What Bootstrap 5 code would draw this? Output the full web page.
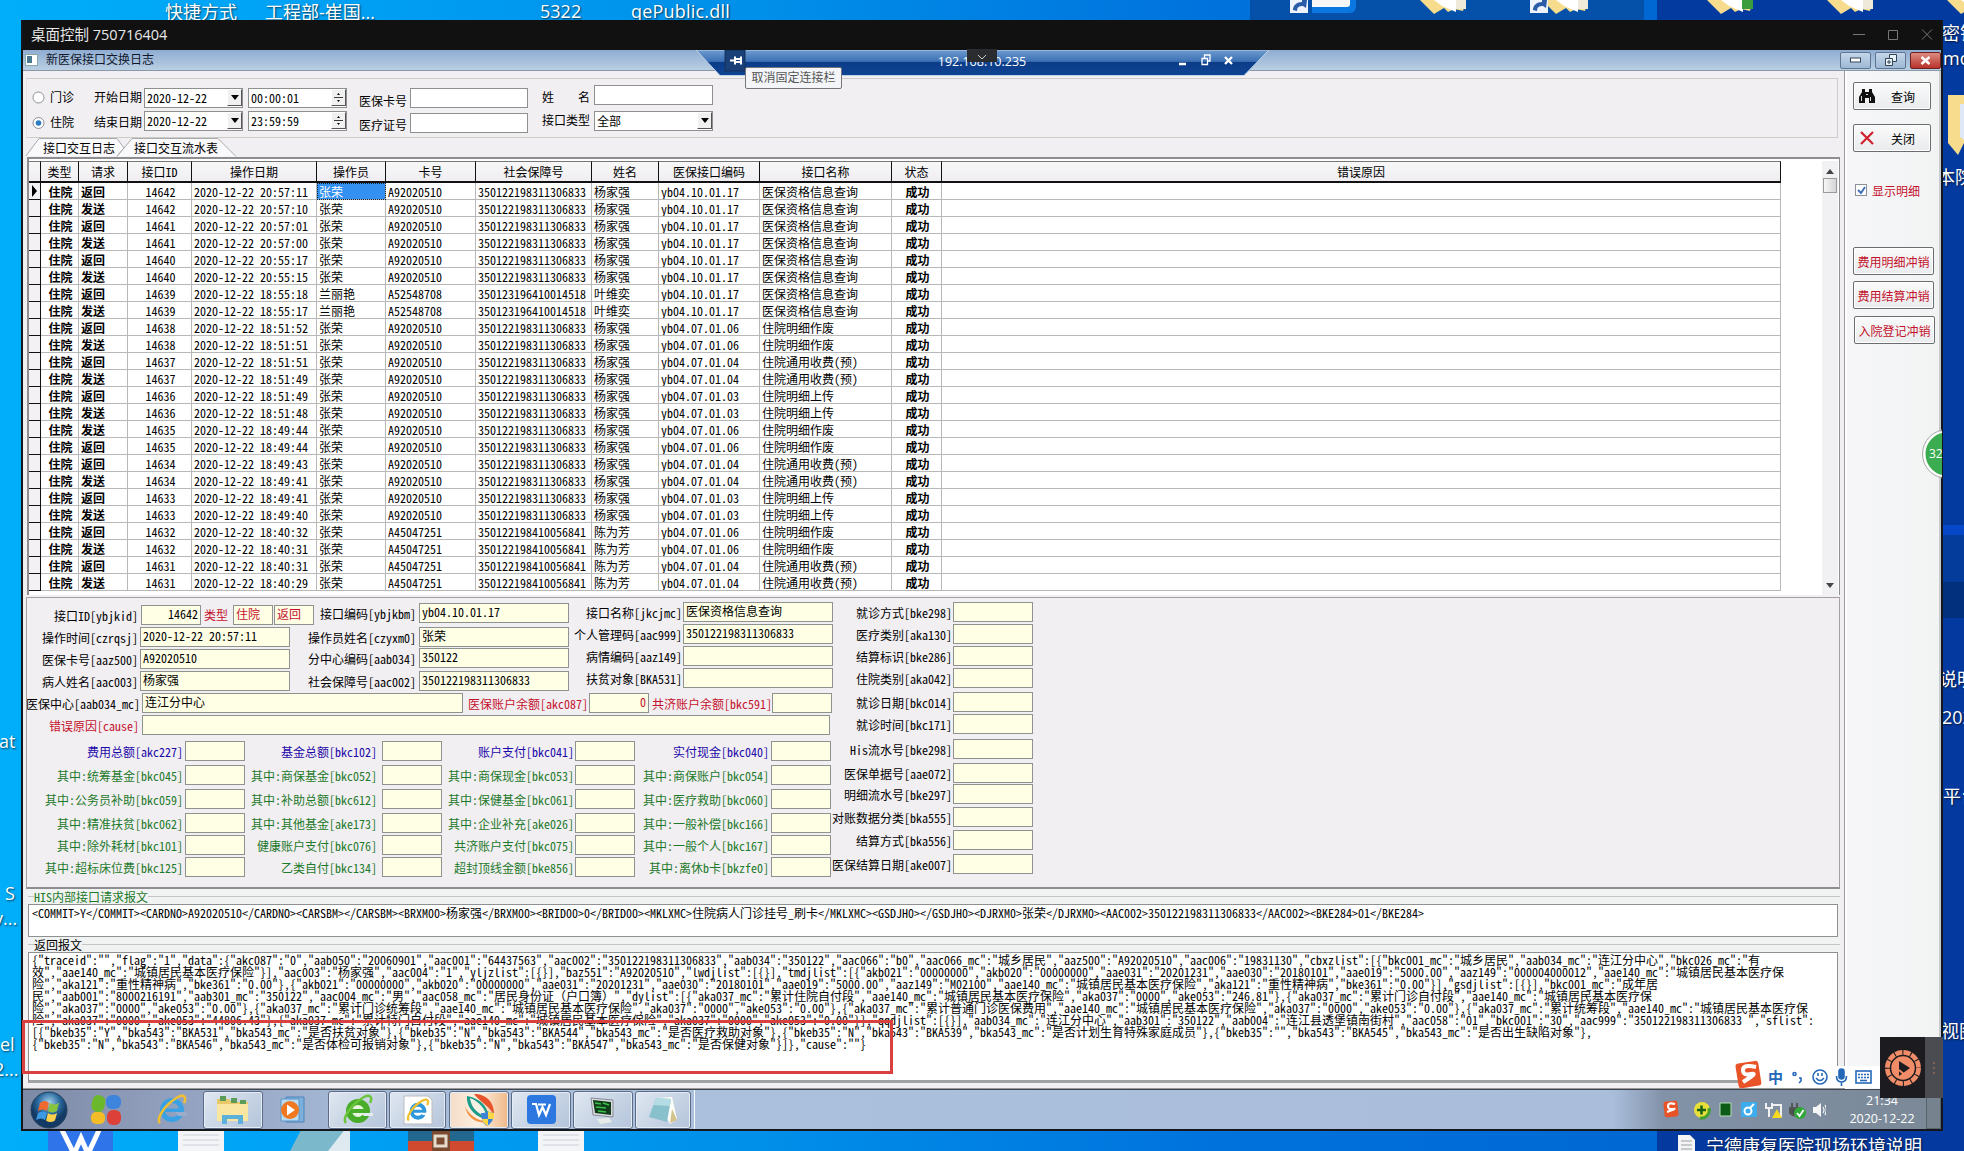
<!DOCTYPE html>
<html lang="zh-CN">
<head>
<meta charset="utf-8">
<title>新医保接口交换日志</title>
<link href="https://cdn.jsdelivr.net/npm/bootstrap@5.3.0/dist/css/bootstrap.min.css" rel="stylesheet">
<style>
:root{--song:"Noto Sans Mono CJK SC","Liberation Mono","Noto Sans CJK SC",monospace;--ui:"Open Sans","Noto Sans CJK SC",sans-serif}
html,body{width:1964px;height:1151px;margin:0;overflow:hidden}
body{font:12px/17px var(--song);color:#000;background:linear-gradient(90deg,#00aefa 0,#00a2f5 15%,#0090ea 38%,#0072dc 62%,#0060cc 100%)}
svg{display:block;flex:none}
.desk{width:1964px;height:1151px}
.deep{left:1657px;top:0;width:307px;height:1151px;background:linear-gradient(#033aa0 0 525px,#0748c8 525px 535px,#043c9c 535px 582px,#02307c 582px 618px,#043aa0 618px)}
.mid{left:1250px;top:0;width:394px;height:20px;background:#0550a8}
.dicon{position:absolute;font:18px/22px var(--ui);color:#fff;white-space:nowrap;text-shadow:1px 1px 2px #000a}
.art{position:absolute;left:0;top:0}
.win{left:21px;top:20px;width:1922px;height:1111px;background:#111;border:solid #14181c;border-width:0 2px 2px 2px;overflow:hidden}
.cap{height:30px;color:#e8e8e8;font:14.5px/30px var(--ui);padding:0 7px 0 8px;flex:none}
.mdi{height:21px;background:linear-gradient(#8facd2,#b9cfe3);border-bottom:1px solid #8a98a8;font:12px/20px var(--ui);color:#10182c;flex:none;padding-left:2px}
.mbtn{width:31px;height:17px;border:1px solid #5f7590;border-radius:2px;background:linear-gradient(#c4d6ea,#9db8d4);display:flex;align-items:center;justify-content:center}
.mbtn.x{background:linear-gradient(#dc8c80,#b8322c);border-color:#6c2020}
.pane{background:#f1eff2;min-height:0}
.left{width:1822px;border-right:1px solid #9a9a9e}
.side{width:96px;border-left:2px solid #fff;border-right:2px solid #c8ccd0;background:linear-gradient(90deg,#f6f6f8,#f2f4f4);padding:11px 0 0 6px}
.filter{margin:7px 6px 0 3px;height:60px;border:1px solid #cdcdc8;border-left-color:#e2e2e2;padding:9px 0 0 5px;flex:none}
.frow{height:22.5px;line-height:18px}
.w62{width:62px}.w50{width:50px}.w51{width:51px}.w52{width:52px}
.box{background:#fff;border:1px solid #8e8f8f;height:20px;padding-left:2px;line-height:18px;white-space:nowrap}
.w99{width:99px}.w118{width:118px}.w119{width:119px}
.drop{width:15px;height:17px;background:#f0f0f0;border:1px solid #fff;border-right-color:#555;border-bottom-color:#555;display:flex;align-items:center;justify-content:center}
.tabs{height:19px;flex:none}
.gridbox{margin:0 4px 0 4px;border:2px solid #8e8e92;border-right-width:1px;border-bottom:0;background:#fff;height:438px;flex:none;padding-top:2px}
.log{table-layout:fixed;width:1752px;border-collapse:separate;border-spacing:0;line-height:15px}
.log th{height:22px;background:linear-gradient(#f8f8f8,#efedf1);border-right:1px solid #111;border-bottom:2px solid #111;border-top:1px solid #777;font-weight:400;text-align:center;padding:0;white-space:nowrap}
.log td{height:17px;padding:0 0 0 2px;border-right:1px solid #b8b8b8;border-bottom:1px solid #b8b8b8;white-space:nowrap;overflow:hidden}
.log td.ind{background:#f3f1f4;border-right:1px solid #111;border-bottom:1px solid #111;padding:0 0 0 2px}
.log td.sel{background:#3390f0;color:#fff;outline:1px dotted #123;outline-offset:-1px}
.sbar{width:16px;background:#f1f0f2;margin-right:1px}
.thumb{width:14px;height:15px;background:linear-gradient(90deg,#f6f6f6,#d4d4d6);border:1px solid #9a9a9a}
.form{margin:0 4px 0 3px;height:292px;border:1px solid #a5a0a6;border-bottom:2px solid #8e8e92;flex:none;background:#f2eff3}
.f{display:flex;height:22px;flex:none}
.f>.l{display:flex;justify-content:flex-end;white-space:nowrap;line-height:22px;flex:none}
.f>.i{background:#ffffe6;border:1px solid #8f9390;height:20px;line-height:16px;padding:0 2px;white-space:nowrap;flex:none}
.red{color:#c4122c}.blue{color:#1c08a8}.green{color:#1d7a2a}
.legend-row{height:15px;line-height:15px;margin:0 4px 0 5px;flex:none;background:#f1f3f2}
.legend-row::before,.legend-row::after{content:"";border-top:1px solid #c2c6c4;width:6px;margin-top:7px}
.legend-row::after{flex:1}
.memo{background:#fff;border:1px solid #8e9092;margin:0 6px 0 5px;padding:2px 0 0 3px;line-height:12px;white-space:pre;flex:none}
.memo.json{padding-top:1px;height:131px;border-bottom:3px solid #a0a2a4}
.sbtn{border:1px solid #6a6c70;border-radius:2px;background:linear-gradient(#fafafa,#e9ebed);height:28px;display:flex;align-items:center;flex:none;box-shadow:inset 0 0 0 1px #fff;white-space:nowrap}
.task{height:40px;border-top:1px solid #3c4450;background:linear-gradient(90deg,#7c8aa6 0,#8e9cba 120px,#a6bad8 340px,#abc0dc 600px,#aabedc 1590px,#8292a8 1640px,#7a8896 100%);flex:none}
.tb{height:38px;border:1px solid #5d6c84;border-radius:3px;box-shadow:inset 0 0 0 1px #e4ecf6;background:linear-gradient(135deg,#dfe7f1,#b4c4da);display:flex;align-items:center;justify-content:center;flex:none}
.tip{left:745px;top:67px;width:97px;height:22px;background:#f4f5f9;border:1px solid #767676;border-radius:2px;color:#555;font:12px/19px var(--ui);text-align:center;white-space:nowrap}
.mark-red{left:22px;top:1020px;width:871px;height:54px;border:3px solid #d8413f}
.ime{left:1748px;top:1066px;width:132px;height:22px;background:#fff}
.over{position:absolute}
.clock{font:12.5px/18px var(--ui);color:#fff;text-align:center;width:72px}
</style>
<script src="https://cdn.jsdelivr.net/npm/bootstrap@5.3.0/dist/js/bootstrap.bundle.min.js"></script>
</head>
<body>
<div class="desk position-relative overflow-hidden">
<div class="deep over"></div><div class="mid over"></div>
<svg class="art" width="1964" height="1151">
  <defs><g id="fold"><path d="M0 0h46l-3 11-9-2-6 3-4-4-10 6-4-4z" fill="#f6dc8c"/><path d="M14 0h22v12l-14-6z" fill="#fff"/><path d="M36 0h10v9h-10z" fill="#eee9d8"/></g>
  <g id="lnk"><rect width="18" height="13" fill="#eef2fa"/><path d="M3 10c0-5 4-8 9-8v-2l5 0-1 8-3-2c-4 0-6 1-6 5z" fill="#2a5ca8"/></g></defs>
  <path d="M1312 0h44v7a6 6 0 0 1-6 6h-38z" fill="#0a78e0"/><path d="M1312 0h38v4a3 3 0 0 1-3 3h-35z" fill="#f8f8f8"/>
  <use href="#lnk" x="1290"/><use href="#fold" x="1420"/><use href="#fold" x="1542"/><use href="#lnk" x="1530"/><use href="#fold" x="1707"/><path d="M1742 0h11v9h-11z" fill="#3a9c3c"/><use href="#fold" x="1827"/><use href="#fold" x="1947"/>
  <path d="M1948 95h16v48l-6 12-10-12z" fill="#f6dc8c"/><path d="M1960 104h4v36l-4-3z" fill="#dfe8f6"/>
  <path d="M48 1128h65v23h-65z" fill="#2f74e8"/><path d="M61 1128l13 26 7-16 7 16 12-26" fill="none" stroke="#fff" stroke-width="5"/>
  <g fill="#f2f4f6"><path d="M178 1128h46v23h-46zM538 1128h46v23h-46z"/></g><path d="M183 1135h36m-36 5h36m-36 5h36M543 1135h36m-36 5h36m-36 5h36" stroke="#ccd2d8"/>
  <path d="M302 1128h46v23h-58z" fill="#7cb8cc"/><path d="M346 1128l4 0v23h-22z" fill="#dfeaf0"/>
  <path d="M408 1128h66v14h-66z" fill="#22688e"/><path d="M408 1141h66v10h-66z" fill="#d04a30"/><path d="M432 1128h18v23h-18z" fill="#7c4a30"/><rect x="435" y="1136" width="11" height="10" fill="none" stroke="#e4dccc" stroke-width="3"/>
  <path d="M1678 1135h12l5 5v11h-17z" fill="#f4f4f4"/><path d="M1681 1141h11m-11 4h11m-11 4h11" stroke="#98a0a8"/>
</svg>
<div class="dicon" style="left:165px;top:1px">快捷方式</div><div class="dicon" style="left:265px;top:1px">工程部-崔国...</div>
<div class="dicon" style="left:540px;top:0">5322</div><div class="dicon" style="left:631px;top:0;letter-spacing:.2px">qePublic.dll</div>
<div class="dicon" style="left:1942px;top:22px">密钥</div><div class="dicon" style="left:1943px;top:47px">mo</div><div class="dicon" style="left:1937px;top:166px">本院</div>
<div class="dicon" style="left:1939px;top:668px">说明</div><div class="dicon" style="left:1942px;top:706px">2020</div><div class="dicon" style="left:1943px;top:785px">平台</div><div class="dicon" style="left:1941px;top:1020px">视图</div>
<div class="dicon" style="left:-1px;top:730px">at</div><div class="dicon" style="left:5px;top:882px">S</div><div class="dicon" style="left:-6px;top:907px">v...</div><div class="dicon" style="left:0;top:1033px">el</div><div class="dicon" style="left:-6px;top:1058px">2...</div>
<div class="dicon" style="left:1706px;top:1135px">宁德康复医院现场环境说明</div>

<div class="win over d-flex flex-column">
  <div class="cap d-flex justify-content-between"><span>桌面控制 750716404</span>
    <svg width="81" height="30" viewBox="0 0 81 30" fill="none" stroke="#777"><path d="M0 14.5h12"/><path d="M35.500 10.500h9v9h-9zM69 9.500l10 10m0-10l-10 10"/></svg></div>
  <div class="mdi d-flex align-items-center"><svg width="13" height="12"><rect x=".5" y=".5" width="12" height="11" fill="#fff" stroke="#8aa"/><rect x="2" y="2" width="5" height="7" fill="#4a7890"/></svg>
    <span class="ms-2 flex-grow-1">新医保接口交换日志</span>
    <div class="d-flex gap-1"><span class="mbtn"><svg width="11" height="6"><rect x=".5" y="1" width="10" height="4" fill="#fff" stroke="#345"/></svg></span>
    <span class="mbtn"><svg width="12" height="12" fill="#e8f0f8" stroke="#345"><path d="M4.500.5h7v7h-7z"/><path d="M.5 4.500h7v7h-7z"/><path d="M3 7h2v2h-2z"/></svg></span>
    <span class="mbtn x"><svg width="11" height="9"><path d="M1.500 1l8 7m0-7l-8 7" stroke="#fff" stroke-width="2.500"/></svg></span></div></div>
  <div class="pane flex-grow-1 d-flex">
    <div class="left d-flex flex-column">
      <div class="filter">
        <div class="frow d-flex"><span class="w62 d-flex"><svg width="18" height="19"><circle cx="6.500" cy="9.500" r="5.500" fill="#fff" stroke="#8c9098"/></svg>门诊</span><span class="w50">开始日期</span>
          <div class="box w99 d-flex justify-content-between">2020-12-22<span class="drop"><svg width="8" height="5"><path d="M0 0h8l-4 5z"/></svg></span></div>
          <div class="box w99 d-flex justify-content-between" style="margin-left:5px">00:00:01<span class="drop"><svg width="9" height="15"><path d="M3 5l1.500-2L6 5zM3 10h3l-1.500 2zM0 7h9v.7h-9z"/></svg></span></div>
          <span class="w51 pt-1" style="margin-left:12px">医保卡号</span><div class="box w118"></div>
          <span class="w52 d-flex justify-content-between pe-1" style="margin-left:14px"><i class="fst-normal">姓</i><i class="fst-normal">名</i></span><div class="box w119" style="margin-top:-3px"></div></div>
        <div class="frow d-flex"><span class="w62 d-flex pt-1"><svg width="18" height="17"><circle cx="6.500" cy="8" r="5.500" fill="#fff" stroke="#8c9098"/><circle cx="6.500" cy="8" r="2.800" fill="#2c7cc4"/></svg><span style="margin-top:-2px">住院</span></span><span class="w50" style="padding-top:2px">结束日期</span>
          <div class="box w99 d-flex justify-content-between">2020-12-22<span class="drop"><svg width="8" height="5"><path d="M0 0h8l-4 5z"/></svg></span></div>
          <div class="box w99 d-flex justify-content-between" style="margin-left:5px">23:59:59<span class="drop"><svg width="9" height="15"><path d="M3 5l1.500-2L6 5zM3 10h3l-1.500 2zM0 7h9v.7h-9z"/></svg></span></div>
          <span class="w51 pt-1" style="margin-left:12px;margin-top:1px">医疗证号</span><div class="box w118" style="margin-top:2px"></div>
          <span class="w52" style="margin-left:14px">接口类型</span><div class="box w119 d-flex justify-content-between">全部<span class="drop"><svg width="8" height="5"><path d="M0 0h8l-4 5z"/></svg></span></div></div>
      </div>
      <div class="tabs position-relative"><svg width="240" height="19" class="over"><path d="M3 18L16 .5h78L101 10 94 18" fill="#faf9fb" stroke="#a8aaac"/><path d="M94 18.500L109 .5h86l18 18" fill="#faf9fb" stroke="#a8aaac"/></svg>
        <div class="position-relative d-flex" style="padding-left:20px;line-height:20px"><span style="width:91px">接口交互日志</span><span>接口交互流水表</span></div></div>
      <div class="gridbox d-flex"><div class="flex-grow-1"><table class="log"><colgroup><col style="width:12px"><col style="width:38px"><col style="width:49px"><col style="width:64px"><col style="width:125px"><col style="width:69px"><col style="width:90px"><col style="width:116px"><col style="width:67px"><col style="width:101px"><col style="width:132px"><col style="width:50px"><col style="width:839px"></colgroup>
        <thead><tr><th></th><th>类型</th><th>请求</th><th>接口ID</th><th>操作日期</th><th>操作员</th><th>卡号</th><th>社会保障号</th><th>姓名</th><th>医保接口编码</th><th>接口名称</th><th>状态</th><th>错误原因</th></tr></thead><tbody id="rows"></tbody></table></div>
        <div class="sbar d-flex flex-column align-items-center"><svg width="8" height="17"><path d="M0 13l4-5 4 5z" fill="#444"/></svg><div class="thumb"></div><svg class="mt-auto" width="8" height="18"><path d="M0 6h8l-4 5z" fill="#444"/></svg></div></div>
      <div class="form d-flex" style="margin-top:2px">
        <div style="width:806px"><div class="d-flex" style="height:95px"><div id="fa" style="width:287px;padding-top:7px"></div><div id="fb" style="width:255px;padding-top:5px"></div><div id="fc" style="padding-top:4px"></div></div>
          <div class="f"><span class="l" style="width:113px">医保中心[aab034_mc]</span><span class="i" style="width:321px;margin-left:2px">连江分中心</span><span class="l red" style="width:125px">医保账户余额[akc087]</span><span class="i red text-end" style="width:60px;margin-left:1px">0</span><span class="l red" style="width:123px">共济账户余额[bkc591]</span><span class="i" style="width:60px"></span></div>
          <div class="f" style="height:26px"><span class="l red" style="width:112px">错误原因[cause]</span><span class="i" style="width:688px;margin-left:3px"></span></div>
          <div id="sums"></div></div>
        <div id="fr" style="padding-top:4px"></div>
      </div>
      <div class="legend-row d-flex"><span class="green">HIS内部接口请求报文</span></div>
      <div class="memo" style="height:33px">&lt;COMMIT&gt;Y&lt;/COMMIT&gt;&lt;CARDNO&gt;A92020510&lt;/CARDNO&gt;&lt;CARSBM&gt;&lt;/CARSBM&gt;&lt;BRXM00&gt;杨家强&lt;/BRXM00&gt;&lt;BRID00&gt;0&lt;/BRID00&gt;&lt;MKLXMC&gt;住院病人门诊挂号_刷卡&lt;/MKLXMC&gt;&lt;GSDJH0&gt;&lt;/GSDJH0&gt;&lt;DJRXM0&gt;张荣&lt;/DJRXM0&gt;&lt;AAC002&gt;350122198311306833&lt;/AAC002&gt;&lt;BKE284&gt;01&lt;/BKE284&gt;</div>
      <div class="legend-row d-flex"><span>返回报文</span></div>
      <div class="memo json">{"traceid":"","flag":"1","data":{"akc087":"0","aab050":"20060901","aac001":"64437563","aac002":"350122198311306833","aab034":"350122","aac066":"b0","aac066_mc":"城乡居民","aaz500":"A92020510","aac006":"19831130","cbxzlist":[{"bkc001_mc":"城乡居民","aab034_mc":"连江分中心","bkc026_mc":"有
效","aae140_mc":"城镇居民基本医疗保险"}],"aac003":"杨家强","aac004":"1","yljzlist":[{}],"baz551":"A92020510","lwdjlist":[{}],"tmdjlist":[{"akb021":"00000000","akb020":"00000000","aae031":"20201231","aae030":"20180101","aae019":"5000.00","aaz149":"000004000012","aae140_mc":"城镇居民基本医疗保
险","aka121":"重性精神病","bke361":"0.00"},{"akb021":"00000000","akb020":"00000000","aae031":"20201231","aae030":"20180101","aae019":"5000.00","aaz149":"M02100","aae140_mc":"城镇居民基本医疗保险","aka121":"重性精神病","bke361":"0.00"}],"gsdjlist":[{}],"bkc001_mc":"成年居
民","aab001":"8000216191","aab301_mc":"350122","aac004_mc":"男","aac058_mc":"居民身份证（户口簿）","dylist":[{"aka037_mc":"累计住院自付段","aae140_mc":"城镇居民基本医疗保险","aka037":"0000","ake053":"246.81"},{"aka037_mc":"累计门诊自付段","aae140_mc":"城镇居民基本医疗保
险","aka037":"0000","ake053":"0.00"},{"aka037_mc":"累计门诊统筹段","aae140_mc":"城镇居民基本医疗保险","aka037":"0000","ake053":"0.00"},{"aka037_mc":"累计普通门诊医保费用","aae140_mc":"城镇居民基本医疗保险","aka037":"0000","ake053":"0.00"},{"aka037_mc":"累计统筹段","aae140_mc":"城镇居民基本医疗保
险","aka037":"0000","ake053":"44806.43"},{"aka037_mc":"累计特门自付段","aae140_mc":"城镇居民基本医疗保险","aka037":"0000","ake053":"0.00"}],"qqdjlist":[{}],"aab034_mc":"连江分中心","aab301":"350122","aab004":"连江县透堡镇南街村","aac058":"01","bkc001":"30","aac999":"350122198311306833 ","sflist":
[{"bkeb35":"Y","bka543":"BKA531","bka543_mc":"是否扶贫对象"},{"bkeb35":"N","bka543":"BKA544","bka543_mc":"是否医疗救助对象"},{"bkeb35":"N","bka543":"BKA539","bka543_mc":"是否计划生育特殊家庭成员"},{"bkeb35":"","bka543":"BKA545","bka543_mc":"是否出生缺陷对象"},
{"bkeb35":"N","bka543":"BKA546","bka543_mc":"是否体检可报销对象"},{"bkeb35":"N","bka543":"BKA547","bka543_mc":"是否保健对象"}]},"cause":""}</div>
      <div style="height:6px;border-bottom:1px solid #999" class="flex-shrink-0"></div>
    </div>
    <div class="side d-flex flex-column">
      <div class="sbtn" style="width:78px"><svg width="18" height="17" viewBox="0 0 18 17" style="margin-left:4px"><path d="M4 1h3v3h4v-3h3v3l3 5v6h-6v-5h-4v5h-6v-6l3-5z" fill="#111"/><path d="M3 8h1v5h-1zM12 9h1v4h-1zM8 6h2v1h-2z" fill="#ddd"/></svg><span class="mx-auto">查询</span></div>
      <div class="sbtn" style="width:78px;margin-top:14px"><svg width="18" height="16" style="margin-left:4px"><path d="M3 2l12 12M15 2L3 14" stroke="#d0202c" stroke-width="2.200"/></svg><span class="mx-auto">关闭</span></div>
      <div class="d-flex red" style="margin:30px 0 0 2px;height:18px"><svg width="13" height="16" class="me-1"><rect x=".5" y="2.500" width="11" height="11" fill="#fff" stroke="#8c9098"/><path d="M3 8l3 3 4-6" fill="none" stroke="#3a6cb4" stroke-width="1.800"/></svg>显示明细</div>
      <div class="sbtn red justify-content-center" style="width:81px;margin-top:47px">费用明细冲销</div>
      <div class="sbtn red justify-content-center" style="width:81px;margin-top:6px">费用结算冲销</div>
      <div class="sbtn red justify-content-center" style="width:81px;margin:7px 0 0 1px">入院登记冲销</div>
    </div>
  </div>
  <div class="task d-flex align-items-center">
    <svg width="180" height="38" viewBox="23 1090 180 38">
      <defs><radialGradient id="orb" cy=".3"><stop offset="0" stop-color="#a8d4ee"/><stop offset=".6" stop-color="#2c6ca0"/><stop offset="1" stop-color="#123a64"/></radialGradient></defs>
      <circle cx="49" cy="1109" r="18" fill="url(#orb)" stroke="#26405c"/>
      <path d="M40 1102q5-4 9 0l-2 8q-4-3-9 0z" fill="#ee6a30"/><path d="M50 1102q5 3 9-.5l-2 8.500q-5 3-9 0z" fill="#86c440"/><path d="M38 1112q5-3 9 0l-2 7q-4-3-9 0z" fill="#3c9ae4"/><path d="M48 1112q4 3 9 0l-2 7.500q-5 3-9 0z" fill="#fcd04c"/>
      <rect x="92" y="1094" width="13" height="17" rx="6" fill="#6cb82c" transform="rotate(12 98 1102)"/><rect x="106" y="1094" width="15" height="14" rx="6" fill="#3c84dc"/><rect x="91" y="1111" width="14" height="12" rx="5" fill="#f4bc28"/><rect x="107" y="1109" width="14" height="15" rx="6" fill="#dc4038"/>
      <circle cx="172" cy="1109" r="9.500" fill="none" stroke="#3aa2e4" stroke-width="5"/><path d="M165 1107.500h14v3.500h-14z" fill="#3aa2e4"/><path d="M175 1111h12v4h-9z" fill="#9cacc8"/><path d="M160 1122c-4-4 4-18 18-26 6-3 9 0 6 6" fill="none" stroke="#f0c030" stroke-width="2.500"/>
    </svg>
    <div class="tb" style="width:60px"><svg width="34" height="32"><path d="M1 5h12l2 3h17v18H1z" fill="#e8c868"/><path d="M4 2h6v5H4zM15 4h6v5h-6zM24 6h6v4h-6z" fill="#5c9c58"/><path d="M1 10h31v17H1z" fill="#fae6a0"/><path d="M6 30v-9h21v9h-5v-5H11v5z" fill="#5cb0dc"/></svg></div>
    <div class="d-flex justify-content-center" style="width:65px"><svg width="30" height="30" style="margin-right:5px"><path d="M8 2h18v25H8z" fill="#7cb0dc" stroke="#4a84b8"/><path d="M3 4h18v22H3z" fill="#b8dcf4" stroke="#5a94c4"/><circle cx="12" cy="15" r="9" fill="#f07820"/><path d="M9 9.500l8 5.500-8 5.500z" fill="#fff"/></svg></div>
    <div class="tb" style="width:59px"><svg width="34" height="32" viewBox="155 1093 34 32"><circle cx="172" cy="1110" r="9" fill="#e8f6e0" stroke="#48ac28" stroke-width="6"/><path d="M165 1108h14v4h-14z" fill="#48ac28"/><path d="M175 1112h12v3h-9z" fill="#e4ecf2"/><path d="M160 1122c-4-4 4-18 18-26 6-3 9 0 6 6" fill="none" stroke="#6cc43c" stroke-width="2.500"/></svg></div>
    <div class="tb" style="width:57px;margin-left:2px"><svg width="30" height="30" viewBox="0 0 30 30"><path d="M1 1h24l4 4v24H1z" fill="#fff" stroke="#bbb"/><svg width="26" height="25" x="2" y="3" viewBox="155 1093 34 32"><circle cx="172" cy="1110" r="8.500" fill="none" stroke="#2e98dc" stroke-width="5"/><path d="M165 1108h14v4h-14z" fill="#2e98dc"/><path d="M175 1112h12v3h-9z" fill="#fff"/><path d="M160 1122c-4-4 4-18 18-26 6-3 9 0 6 6" fill="none" stroke="#f0c030" stroke-width="3"/></svg></svg></div>
    <div class="tb" style="width:60px;margin-left:3px;background:linear-gradient(90deg,#f4dcc8,#fdf0e0,#f0b888)"><svg width="34" height="36"><path d="M12 2C24 2 33 10 32 24 28 14 20 12 12 2z" fill="#e8542c"/><path d="M5 4c12 2 22 10 22 24C14 26 4 16 5 4z" fill="#1c9c88"/><path d="M8 6c10 4 14 10 18 20-10-4-17-10-18-20z" fill="#f4f0e4"/><path d="M3 14c2 12 12 18 22 16C14 28 6 22 3 14z" fill="#f09040"/><path d="M19 21q5 0 7-2 2 2 6 2 0 9-7 13-6-4-6-13z" fill="#3c84d4"/><path d="M26 19q2 2 6 2v6h-6zM20 27h6v7q-5-3-6-7z" fill="#fcd844"/></svg></div>
    <div class="tb" style="width:60px;margin-left:2px"><svg width="29" height="29"><rect width="29" height="29" rx="4" fill="#2c78e0"/><path d="M5 9h4l3 11 3.500-8 3.500 8 4-11M11 9.500h8" fill="none" stroke="#fff" stroke-width="2.200"/></svg></div>
    <div class="tb" style="width:60px;margin-left:2px"><svg width="34" height="30"><path d="M5 3l22 2v17L7 20z" fill="#d8dcd8" stroke="#889"/><path d="M7 5l18 2v13L9 18z" fill="#123c1c"/><path d="M9 8l6 1M10 12l10 1M12 16l8 1M17 8l6 2" stroke="#38c048" stroke-width="1.500"/><path d="M11 24l12-1 3 4-12 2z" fill="#e8ece8"/></svg></div>
    <div class="tb" style="width:56px;margin-left:2px"><svg width="32" height="30"><path d="M9 3l16-1 5 22-7 5z" fill="#fdfdf8"/><path d="M9 3l15 1-4 23L2 22z" fill="#88c0cc"/><path d="M9 3l15 1-1 7-17-1z" fill="#b4dce4"/><path d="M25 14l5 11-7 3z" fill="#d4c48c"/></svg></div>
    <div class="border-start border-light h-100" style="margin-left:3px"></div>
    <svg class="ms-auto" width="166" height="30" viewBox="1660 1095 166 30">
      <rect x="1664" y="1101" width="14" height="16" rx="3" fill="#e85428" transform="rotate(-6 1671 1109)"/><path d="M1675 1104q-7-2-7 2t5 3-6 3" fill="none" stroke="#fff" stroke-width="2.200"/>
      <circle cx="1702" cy="1110" r="8" fill="#e8e038"/><path d="M1700 1118a8 8 0 0 0 9-10" stroke="#40a030" stroke-width="3" fill="none"/><path d="M1697 1110h9m-4.500-4.500v9" stroke="#186018" stroke-width="2.500"/>
      <path d="M1720 1103h11v13h-11z" fill="#0c5c18" stroke="#b8dcb8"/><path d="M1741 1102h16v15h-16z" fill="#3cacec"/><circle cx="1748" cy="1111" r="3.500" fill="none" stroke="#fff" stroke-width="2"/><path d="M1750 1108l4-4" stroke="#fff" stroke-width="2"/>
      <path d="M1766 1103v5h6v-5M1769 1108v9M1772 1105h9v11h-5" fill="none" stroke="#f0f0f0" stroke-width="2"/><path d="M1777 1109l5 9h-10z" fill="#f8d820"/>
      <path d="M1790 1108h10v5q-5 5-10 0zM1792 1103v5m5-5v5" fill="#48504c" stroke="#555" stroke-width="2"/><circle cx="1800" cy="1113" r="6" fill="#30a838"/><path d="M1797 1113l2.500 3 4-6" fill="none" stroke="#fff" stroke-width="1.800"/>
      <path d="M1813 1107h3l5-4v14l-5-4h-3z" fill="#f4f6f8"/><path d="M1823 1107q2 3 0 6M1825 1105q2.500 5 0 10" fill="none" stroke="#f4f6f8" stroke-width="1.200"/></svg>
    <div class="clock" style="margin:0 8px 0 20px">21:34<br>2020-12-22</div>
    <div class="h-100" style="width:15px;background:#76828e;border:1px solid #59636e"></div>
  </div>
</div>

<svg class="over" style="left:696px;top:50px" width="574" height="27"><defs><linearGradient id="rd" x2="0" y2="1"><stop offset="0" stop-color="#6e9cd0"/><stop offset=".45" stop-color="#3c70b4"/><stop offset=".46" stop-color="#0c3c88"/><stop offset="1" stop-color="#0e4494"/></linearGradient></defs><path d="M0 0h573l-25 25.500H24z" fill="url(#rd)" stroke="#c0d4e8"/><rect x="29" y="0" width="20" height="21" fill="#1a4078" stroke="#12305c"/><path d="M34 10.500h5m0-4v8m0-5.500h6v3h-6m6-5.500v8" stroke="#fff" stroke-width="2" fill="none"/><path d="M483 14h7" stroke="#fff" stroke-width="2.500"/><path d="M506 8.500h5.500v6h-5.500zM508.500 8v-3h5.500v6h-2" fill="none" stroke="#fff" stroke-width="1.300"/><path d="M529 7l7 7m0-7l-7 7" stroke="#fff" stroke-width="2.300"/></svg>
<div class="over text-center text-white" style="left:932px;top:52px;width:100px;font:12.500px/19px var(--ui)">192.168.10.235</div>
<svg class="over" style="left:967px;top:49px" width="30" height="13"><rect width="30" height="13" fill="#2a2c30"/><path d="M11 6l4 4 4-4" fill="none" stroke="#ccc"/></svg>
<div class="tip over">取消固定连接栏</div>
<div class="mark-red over"></div>
<div class="over overflow-hidden" style="left:1922px;top:428px;width:20px;height:52px"><svg width="50" height="52"><circle cx="25" cy="26" r="22.500" fill="#3cac50" stroke="#fff" stroke-width="2"/><circle cx="25" cy="26" r="24.500" fill="none" stroke="#a8aca8"/><text x="7" y="30" font-size="12" fill="#fff" font-family="Open Sans">32</text></svg></div>
<div class="ime over d-flex align-items-center ps-4" style="gap:9px"><span style="color:#2468b8;font:bold 15px/20px var(--ui);margin-left:-4px">中</span>
  <svg width="104" height="20" fill="none" stroke="#2468b8" stroke-width="1.600"><circle cx="2.500" cy="7" r="1.500"/><path d="M7 11h2v3l-2 2"/><circle cx="28" cy="10" r="7"/><path d="M24 11q4 5 8 0M26 6v3m4-3v3"/><rect x="47" y="2" width="5" height="10" rx="2.500" fill="#2468b8"/><path d="M44.500 9q0 6 5 6t5-6M49.500 15v4"/><rect x="64" y="4" width="15" height="12"/><path d="M66 7.500h11M66 10.500h11" stroke-dasharray="2 1"/><path d="M68 13.500h7"/></svg></div>
<svg class="over" style="left:1733px;top:1059px" width="32" height="32"><rect x="4" y="3" width="23" height="25" rx="3" fill="#e85428" transform="rotate(-9 16 16)"/><path d="M23 8q-13-3-13 3t8 4-8 8" fill="none" stroke="#fff" stroke-width="4"/></svg>
<svg class="over" style="left:1880px;top:1037px" width="63" height="61"><rect width="45" height="61" fill="#1c1c20"/><rect x="45" width="18" height="61" fill="#4a4c52"/><circle cx="23" cy="31" r="13" fill="#f08c68"/><circle cx="23" cy="31" r="15" fill="none" stroke="#f08c68" stroke-width="6" stroke-dasharray="6.800 1.050"/><circle cx="23" cy="31" r="12.500" fill="none" stroke="#1c1c20" stroke-width="1.500"/><path d="M19 24l11 7-11 8z" fill="#1c1c20"/><path d="M19 33l6 5" stroke="#f08c68" stroke-width="2"/><path d="M54 25v2m0 3v2m0 3v2" stroke="#8a6058" stroke-width="2"/></svg>
</div>
<script>
const P={y:['A92020510','350122198311306833','杨家强'],w:['A52548708','350123196410014518','叶维奕'],c:['A45047251','350122198410056841','陈为芳']};
const N={'10.01.17':'医保资格信息查询','07.01.06':'住院明细作废','07.01.04':'住院通用收费(预)','07.01.03':'住院明细上传'};
const R=`1 14642 20:57:11 y 10.01.17|0 14642 20:57:10 y 10.01.17|1 14641 20:57:01 y 10.01.17|0 14641 20:57:00 y 10.01.17|1 14640 20:55:17 y 10.01.17|0 14640 20:55:15 y 10.01.17|1 14639 18:55:18 w 10.01.17|0 14639 18:55:17 w 10.01.17|1 14638 18:51:52 y 07.01.06|0 14638 18:51:51 y 07.01.06|1 14637 18:51:51 y 07.01.04|0 14637 18:51:49 y 07.01.04|1 14636 18:51:49 y 07.01.03|0 14636 18:51:48 y 07.01.03|0 14635 18:49:44 y 07.01.06|1 14635 18:49:44 y 07.01.06|1 14634 18:49:43 y 07.01.04|0 14634 18:49:41 y 07.01.04|1 14633 18:49:41 y 07.01.03|0 14633 18:49:40 y 07.01.03|1 14632 18:40:32 c 07.01.06|0 14632 18:40:31 c 07.01.06|1 14631 18:40:31 c 07.01.04|0 14631 18:40:29 c 07.01.04`.split('|');
rows.innerHTML=R.map((r,k)=>{const[a,id,t,p,c]=r.split(' '),q=P[p];
 return `<tr><td class="ind">${k?'':'<svg width="7" height="12"><path d="M1 0l5 6-5 6z"/></svg>'}</td><td class="fw-bold text-center">住院</td><td class="fw-bold">${+a?'返回':'发送'}</td><td class="text-center">${id}</td><td>2020-12-22 ${t}</td><td class="${k?'':'sel'}">${p=='w'?'兰丽艳':'张荣'}</td><td>${q[0]}</td><td>${q[1]}</td><td>${q[2]}</td><td>yb04.${c}</td><td>${N[c]}</td><td class="fw-bold text-center">成功</td><td></td></tr>`}).join('');
// One caption and its read-only box
const F=(l,lw,v,iw,g=2,c='')=>`<span class="l ${c}" style="width:${lw}px">${l}</span><span class="i" style="width:${iw}px;margin-left:${g}px">${v}</span>`;
const col=(el,a,lw,iw,hs,g)=>el.innerHTML=a.map(([l,v],i)=>`<div class="f" style="height:${hs[i]}px">${F(l,lw,v||'',iw,g)}</div>`).join('');
fa.innerHTML=`<div class="f"><span class="l" style="width:111px">接口ID[ybjkid]</span><span class="i text-end" style="width:60px;margin-left:3px">14642</span><span class="l red" style="width:27px;line-height:20px">类型</span><span class="i red" style="width:40px;margin-left:5px">住院</span><span class="i red" style="width:40px;margin-left:1px">返回</span></div>`+
 [['操作时间[czrqsj]','2020-12-22 20:57:11'],['医保卡号[aaz500]','A92020510'],['病人姓名[aac003]','杨家强']].map(([l,v])=>`<div class="f">${F(l,111,v,150)}</div>`).join('');
col(fb,[['接口编码[ybjkbm]','yb04.10.01.17'],['操作员姓名[czyxm0]','张荣'],['分中心编码[aab034]','350122'],['社会保障号[aac002]','350122198311306833']],102,150,[24,21,23,20],3);
col(fc,[['接口名称[jkcjmc]','医保资格信息查询'],['个人管理码[aac999]','350122198311306833'],['病情编码[aaz149]'],['扶贫对象[BKA531]']],113,150,[22,22,22,20],1);
col(fr,[['就诊方式[bke298]'],['医疗类别[aka130]'],['结算标识[bke286]'],['住院类别[aka042]'],['就诊日期[bkc014]'],['就诊时间[bkc171]'],['His流水号[bke298]'],['医保单据号[aae072]'],['明细流水号[bke297]'],['对账数据分类[bka555]'],['结算方式[bka556]'],['医保结算日期[ake007]']],119,80,[22,22,22,24,22,25,24,21,23,23,24,20],1);
const S=`费用总额[akc227] 基金总额[bkc102] 账户支付[bkc041] 实付现金[bkc040]|其中:统筹基金[bkc045] 其中:商保基金[bkc052] 其中:商保现金[bkc053] 其中:商保账户[bkc054]|其中:公务员补助[bkc059] 其中:补助总额[bkc612] 其中:保健基金[bkc061] 其中:医疗救助[bkc060]|其中:精准扶贫[bkc062] 其中:其他基金[ake173] 其中:企业补充[ake026] 其中:一般补偿[bkc166]|其中:除外耗材[bkc101] 健康账户支付[bkc076] 共济账户支付[bkc075] 其中:一般个人[bkc167]|其中:超标床位费[bkc125] 乙类自付[bkc134] 超封顶线金额[bke856] 其中:离休b卡[bkzfe0]`.split('|');
const LW=[156,132,132,134],G=[2,5,1,2];
sums.innerHTML=S.map((r,k)=>`<div class="f" style="height:${k<3?24:22}px">${r.split(' ').map((l,i)=>F(l,LW[i],'',60,G[i],k?'green':'blue')).join('')}</div>`).join('');
</script>
</body>
</html>
